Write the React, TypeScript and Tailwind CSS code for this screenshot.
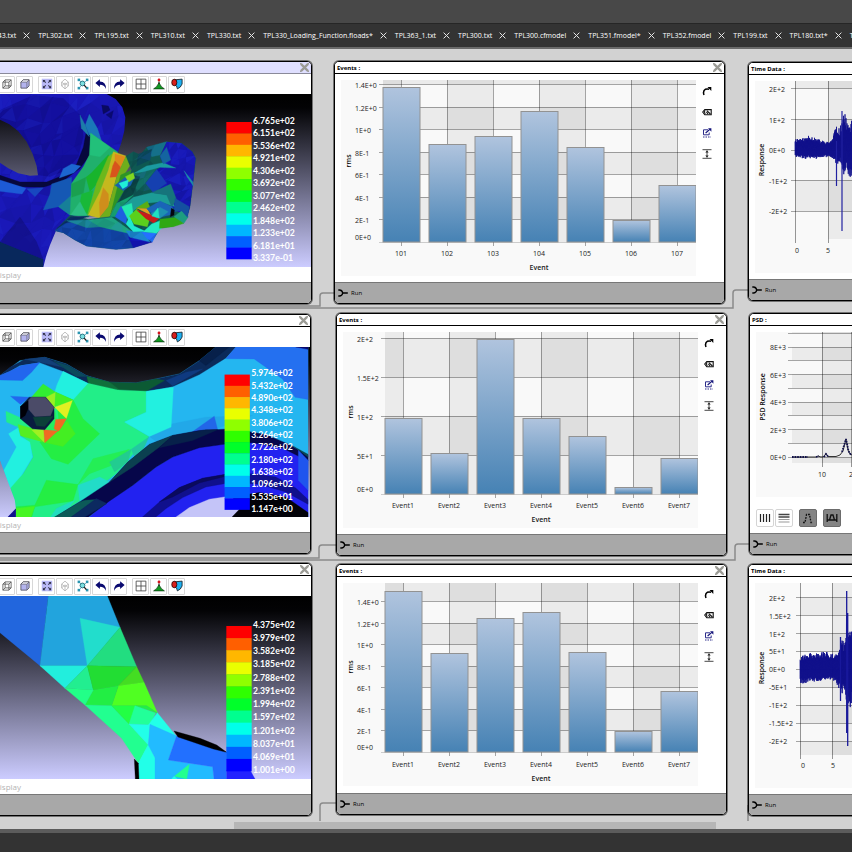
import React from "react";

type Poly = [string, string];

const FONT = "font-['Open_Sans','Noto_Sans',sans-serif]";

/* ---------- helpers ---------- */

function makeRandom(seed: number) {
  let s = seed;
  return () => {
    s = (s * 1664525 + 1013904223) % 4294967296;
    return s / 4294967296;
  };
}

function facets(x0: number, y0: number, x1: number, y1: number, step: number, seed: number) {
  const rnd = makeRandom(seed);
  const cols = Math.ceil((x1 - x0) / step) + 1;
  const rows = Math.ceil((y1 - y0) / step) + 1;
  const pts: [number, number][][] = [];
  for (let r = 0; r < rows; r++) {
    pts.push([]);
    for (let c = 0; c < cols; c++) {
      pts[r].push([
        Math.round(x0 + c * step + (rnd() - 0.5) * step * 0.8),
        Math.round(y0 + r * step + (rnd() - 0.5) * step * 0.8),
      ]);
    }
  }
  const out: { points: string; fill: string; opacity: number }[] = [];
  const add = (a: number[], b: number[], c: number[]) => {
    const v = rnd();
    out.push({
      points: `${a.join()} ${b.join()} ${c.join()}`,
      fill: v > 0.65 ? "#2a4cf0" : "#000030",
      opacity: Math.round(rnd() * 14) / 100,
    });
  };
  for (let r = 0; r + 1 < rows; r++) {
    for (let c = 0; c + 1 < cols; c++) {
      add(pts[r][c], pts[r][c + 1], pts[r + 1][c]);
      add(pts[r][c + 1], pts[r + 1][c + 1], pts[r + 1][c]);
    }
  }
  return out;
}

/* ---------- mesh data (three units per pixel) ---------- */

const bracketBody =
  "-108,102 320,102 347,117 367,142 376,172 373,212 364,248 352,282 380,300 330,470 215,468 168,512 150,555 138,590 130,621 -108,621";
const bracketLobe =
  "500,245 545,250 577,275 587,295 580,360 570,440 560,475 515,440 500,400 460,385 470,330 490,312 480,290";

const bracketHoleAndNeck: Poly[] = [
  ["#07083c", "0,346 60,366 140,366 190,346 230,312 250,262 258,220 270,225 270,285 240,325 190,362 130,382 60,380 0,362"],
  ["#1d5ad6", "-108,340 0,360 78,385 66,402 0,394 -108,380"],
  ["#1747c0", "80,386 130,383 105,410"],
  ["#1c66d0", "190,326 215,312 242,318 222,338 178,354"],
  ["#1558b4", "155,372 215,352 215,420 175,440 130,450 150,402"],
  ["#168098", "175,440 215,405 212,467"],
  ["#1c7ca8", "240,165 258,200 268,230 244,205"],
  ["#1a78b8", "268,163 292,205 305,244 268,225 256,195"],
  ["#0a0a60", "305,135 325,138 330,150 310,162"],
  ["#0a0a70", "318,164 340,152 334,176"],
  ["#20b06c", "272,220 352,275 355,284 330,330 300,400 265,472 210,465 215,370 250,320 268,285"],
  ["#22c07a", "272,220 330,262 300,290 270,285"],
  ["#18b42c", "275,338 325,284 330,300 300,360 270,395 258,352"],
  ["#1aa050", "215,372 258,352 250,400 215,412"],
  ["#18b838", "245,402 278,392 268,462 235,455"],
  ["#2bbd82", "212,465 240,425 262,468"],
  ["#6cb81c", "325,290 344,276 300,395 285,430 262,466 290,370"],
  ["#c6b81e", "340,275 378,288 350,350 325,440 298,474 264,466 300,395 325,330"],
  ["#e08a1c", "345,282 376,290 362,322 345,300"],
  ["#d8541c", "345,302 362,322 352,350 330,352 338,318"],
  ["#cf8e1c", "310,383 325,402 326,440 300,470 298,428"],
  ["#6fae1c", "378,288 402,298 362,360 350,400 330,470 298,474 325,440 350,350"],
  ["#2d9426", "362,345 395,330 380,382 350,430 332,462 350,390"],
];

const bracketRight: Poly[] = [
  ["#0f5a52", "378,288 400,275 415,282 412,295 440,262 500,245 545,250 577,275 587,295 580,360 570,440 560,475 520,498 480,505 470,522 455,546 400,563 348,568 260,558 225,540 190,518 165,512 210,466 265,478 330,470 350,430 380,380 395,330"],
  ["#127064", "400,345 440,320 470,325 435,370 410,395"],
  ["#0b4644", "395,345 420,350 395,410 350,440 372,395"],
  ["#15708a", "440,262 500,245 480,285 455,290"],
  ["#0b4a5a", "415,282 455,268 450,300 410,318"],
  ["#16a070", "350,430 400,405 365,440 345,470 330,470"],
  ["#1246a6", "165,512 200,484 260,500 330,495 380,515 400,530 400,563 348,568 260,558 225,540 190,518"],
  ["#0a2e60", "170,506 212,470 268,468 240,478 195,490"],
  ["#1a8a94", "200,482 265,480 310,500 260,503"],
  ["#1fa884", "265,480 335,472 410,525 350,512 300,500"],
  ["#1414b8", "385,530 457,546 400,563"],
  ["#1b8ad0", "378,512 430,515 450,546 390,532"],
  ["#2570ff", "425,515 470,520 457,546 440,535"],
];

const bracketPort: Poly[] = [
  ["#1a9aa0", "402,340 440,318 490,308 527,324 480,322 430,335"],
  ["#1540b0", "470,328 500,370 460,398 437,370"],
  ["#1464a0", "480,288 500,262 512,300 490,312"],
  ["#1c90a8", "552,332 578,365 580,378 562,352"],
  ["#1560b0", "345,376 378,350 404,350 392,376 370,392"],
  ["#80d820", "376,350 400,338 404,355 386,366"],
  ["#20f0d8", "357,370 385,360 382,378 368,386"],
  ["#1c9c96", "365,440 400,412 455,398 505,405 525,440 480,425 440,430 410,445 380,470"],
  ["#16747c", "455,398 512,372 530,420 515,440 500,405"],
  ["#1e60e0", "345,470 363,438 382,466 378,492"],
  ["#22e8b0", "365,440 395,430 400,465 385,480"],
  ["#20e8d0", "378,492 390,468 402,498 436,514 400,515"],
  ["#5ad01c", "388,468 410,447 448,480 442,500 402,492"],
  ["#5aae14", "408,445 442,424 452,446"],
  ["#e0a020", "412,445 442,446 452,466"],
  ["#c81a1a", "410,450 478,474 462,490 438,476"],
  ["#1a64b8", "440,446 480,423 517,440 522,462 470,474"],
  ["#1e90b0", "452,462 480,442 505,455 480,475"],
  ["#20e0c0", "455,468 474,444 478,475"],
  ["#25e8c0", "455,492 480,482 492,496 470,520 430,515"],
  ["#30a814", "480,478 530,472 552,490 520,500 478,505"],
  ["#1d9d80", "522,470 545,452 565,470 552,490"],
  ["#1450a0", "525,415 568,440 562,472 545,452 522,455"],
  ["#050510", "514,445 523,450 522,465 511,470"],
];

const armMesh: Poly[] = [
  ["#24b6f0", "-108,260 0,225 60,180 135,170 200,190 260,225 330,245 410,247 470,235 540,220 600,180 650,139 927,139 927,654 50,654 25,560 0,480 -108,480"],
  ["#0b2a5a", "0,225 30,200 75,176 135,170 200,190 260,225 330,245 410,247 470,235 540,220 600,180 650,139 710,139 680,172 600,222 520,258 440,273 355,270 265,248 190,212 120,186 60,195 30,212"],
  ["#123f78", "75,176 135,170 190,200 120,185"],
  ["#0b4a5c", "160,180 205,195 262,228 230,228"],
  ["#0c5a34", "262,228 330,245 410,247 470,235 495,240 440,272 355,268 265,247"],
  ["#10703c", "262,228 330,245 360,268 268,248"],
  ["#0f3a80", "500,240 560,215 610,205 520,256"],
  ["#07204a", "600,180 650,139 690,139 620,195"],
  ["#2470f0", "710,139 927,139 927,297 888,290 850,235 765,175 680,174"],
  ["#0a0a70", "890,139 927,139 927,146"],
  ["#2266ee", "-108,270 0,225 30,212 65,195 120,186 95,215 68,240 0,238"],
  ["#22a8e8", "450,408 520,370 620,350 760,345 650,385 560,395 480,430"],
  ["#2266e8", "575,397 645,347 655,387"],
  ["#22ee88", "265,248 355,268 440,272 440,335 375,365 448,408 410,450 350,520 240,602 160,654 50,654 45,600 30,560 70,520 100,470 90,430 60,400 50,370 110,290 190,300 220,295"],
  ["#22f0e0", "190,212 265,248 220,298 165,275 172,252"],
  ["#22f0e0", "440,272 522,260 515,380 450,408 375,365 440,335"],
  ["#22f0e0", "26,400 55,382 62,408 90,425 98,470 65,525 30,565 12,510 50,440"],
  ["#24ee44", "168,275 220,298 250,355 300,400 205,492 155,475 120,425 180,385"],
  ["#24ee44", "140,540 235,553 220,602 105,620 95,654 48,654 48,620 105,615"],
  ["#46f524", "48,625 105,618 92,654 48,654"],
  ["#24ee55", "235,553 280,475 390,447 355,488 270,520"],
  ["#22dcc8", "240,602 235,555 300,530 330,545 265,590"],
  ["#22dcc0", "170,625 225,600 200,632 150,654"],
  ["#22cc90", "330,485 395,447 385,485 345,515"],
  ["#22c8a0", "395,447 448,410 430,450 405,470"],
  ["#22ee88", "18,332 62,352 50,378 20,365"],
  ["#2266ee", "32,287 88,290 62,312"],
  ["#32ee32", "95,290 130,250 168,275 150,310"],
  ["#9af022", "136,292 168,275 165,325"],
  ["#44f022", "168,275 218,298 165,318"],
  ["#e2f022", "165,320 218,300 200,354"],
  ["#24ee60", "130,388 168,330 172,392"],
  ["#f06a22", "168,357 200,355 178,394 163,385"],
  ["#44ee22", "178,392 202,362 227,400 190,438 135,426"],
  ["#55ee22", "62,406 55,372 100,385 135,426"],
  ["#a0f022", "95,388 132,386 134,426"],
  ["#f06a22", "132,388 174,392 135,427"],
  ["#0a1c40", "62,318 88,290 138,290 163,320 163,355 135,388 98,385 62,355"],
  ["#0b4038", "100,350 160,348 135,378 110,376"],
  ["#4b4b68", "85,300 95,290 136,290 163,320 152,346 105,348 85,325"],
  ["#000008", "62,318 85,300 85,325 76,345 62,355"],
  ["#2222f0", "265,654 330,600 400,555 470,500 520,470 600,440 680,430 760,425 850,440 927,480 927,654"],
  ["#06064a", "160,654 240,605 330,545 385,485 450,432 520,405 600,390 700,385 800,402 870,432 927,465 927,482 850,443 760,427 680,431 600,442 520,470 470,500 400,555 330,602 262,654"],
  ["#0c5a58", "160,654 240,605 255,600 290,598 210,654"],
  ["#0c2a60", "210,654 290,595 322,610 250,654"],
  ["#0b4050", "330,545 385,485 450,432 520,405 480,440 400,500"],
  ["#07204a", "520,405 620,388 655,388 580,420 480,442"],
  ["#0a4a54", "880,436 927,462 927,470"],
  ["#1f55ee", "898,450 927,480 927,570 898,540"],
  ["#10108c", "425,654 480,605 540,562 610,534 680,522 760,520 830,530 890,563 927,598 927,612 860,575 780,552 700,546 620,560 550,592 500,625 465,654"],
  ["#0a0a5c", "480,605 540,562 610,534 680,522 680,528 600,548 520,590"],
  ["#c4c4f8", "525,654 570,622 630,597 690,588 745,590 720,630 700,654"],
  ["#020208", "700,590 780,577 860,590 927,637 927,654 695,654 720,628"],
];

const strutMesh: Poly[] = [
  ["#2266dd", "-108,123 145,123 120,332 0,233 -108,160"],
  ["#22a4dd", "145,123 322,123 360,217 262,332 120,332"],
  ["#22ddcc", "240,190 360,217 262,332"],
  ["#22dd80", "360,217 410,335 262,332"],
  ["#22eedd", "120,332 262,332 195,400"],
  ["#22ee90", "262,332 280,405 195,400"],
  ["#22dd33", "262,332 410,335 355,392 280,405"],
  ["#44dd22", "410,335 432,382 355,392"],
  ["#50ff22", "432,382 472,473 440,452 335,452 355,392"],
  ["#22ee44", "280,405 355,392 335,452 255,450"],
  ["#22ff88", "195,400 280,405 255,450"],
  ["#22ff90", "255,450 335,452 387,507 445,570 415,625 365,550"],
  ["#22ff44", "335,452 410,452 387,507"],
  ["#22f044", "405,452 440,452 474,475"],
  ["#22ff99", "405,452 467,474 450,510 387,507"],
  ["#22ffe8", "387,507 450,510 445,570"],
  ["#22ffe8", "445,510 472,473 530,545"],
  ["#22ffe8", "445,568 465,608 465,672 415,672 415,625"],
  ["#22bbff", "450,508 530,543 505,615 638,635 642,672 465,672 465,608 445,570"],
  ["#2270ff", "530,543 640,578 680,592 680,672 642,672 638,635 505,615"],
  ["#2222ff", "680,645 750,645 765,672 680,672"],
  ["#22ff90", "568,628 560,672 523,664"],
  ["#22ffe8", "515,672 522,664 532,672"],
  ["#000000", "522,528 600,550 650,570 680,592 640,582 534,546"],
  ["#000000", "403,612 415,625 417,672 406,672"],
];

const legendColors = [
  "#ff0000", "#ff5f00", "#ffb700", "#eaff00", "#8fff00", "#2fff00",
  "#00ff2a", "#00ff8f", "#00ffea", "#00b7ff", "#005fff", "#0000ff",
];

function Polys({ list }: { list: Poly[] }) {
  return (
    <>
      {list.map(([fill, points], i) => (
        <polygon key={i} fill={fill} stroke={fill} strokeWidth={1} points={points} />
      ))}
    </>
  );
}

function Legend({ x, top, bottom, labelTop, labels }: { x: number; top: number; bottom: number; labelTop: number; labels: string[] }) {
  const step = (bottom - top) / legendColors.length;
  const labelStep = (bottom - 3 - labelTop) / (labels.length - 1);
  return (
    <g>
      {legendColors.map((c, i) => (
        <rect key={c} x={x} y={top + i * step} width={76} height={step + 1} fill={c} />
      ))}
      {labels.map((l, i) => (
        <text key={l} x={x + 80} y={labelTop + i * labelStep + 10} fill="#fff" className="font-['Lato',sans-serif] text-[26px] font-bold">
          {l}
        </text>
      ))}
    </g>
  );
}

function Scene({ id, top, height, children }: { id: string; top: number; height: number; children: React.ReactNode }) {
  return (
    <svg className="block w-full flex-1 min-h-0" viewBox={`-105 ${top} 1038 ${height}`} preserveAspectRatio="xMinYMin slice" role="img" aria-label="Stress contour plot">
      <defs>
        <linearGradient id={id} gradientUnits="userSpaceOnUse" x1="0" y1={top} x2="0" y2={top + height}>
          <stop offset="0" stopColor="#000" />
          <stop offset="0.08" stopColor="#030305" />
          <stop offset="1" stopColor="#ccccff" />
        </linearGradient>
      </defs>
      <rect x={-108} y={top} width={1050} height={height + 6} fill={`url(#${id})`} />
      {children}
    </svg>
  );
}

const bodyFacets = facets(-108, 100, 400, 630, 38, 7);
const lobeFacets = facets(430, 240, 600, 500, 26, 21);
const midFacets = facets(160, 240, 440, 570, 30, 5);

function BracketScene() {
  return (
    <Scene id="sky-a" top={102} height={519}>
      <defs>
        <clipPath id="clip-body"><polygon points={bracketBody} /></clipPath>
        <clipPath id="clip-lobe"><polygon points={bracketLobe} /></clipPath>
        <clipPath id="clip-mid"><polygon points={bracketRight[0][1]} /></clipPath>
      </defs>
      <polygon points={bracketBody} fill="#1a18b8" />
      <polygon fill="#1410a0" points="-108,140 0,150 100,105 190,115 245,170 250,230 235,290 200,330 150,350 113,345 75,240 0,180" />
      <g clipPath="url(#clip-body)">
        {bodyFacets.map((f, i) => (
          <polygon key={i} points={f.points} fill={f.fill} opacity={f.opacity} />
        ))}
        <polygon fill="#08285c" points="-108,500 0,545 130,598 130,625 -108,625" />
        <polygon fill="#0d0b70" points="0,545 60,470 110,545 130,598" opacity="0.5" />
      </g>
      <polygon fill="url(#sky-a)" points="-108,165 0,179 28,193 55,214 80,245 98,282 110,318 114,346 90,347 55,340 25,325 0,308 -108,250" />
      <Polys list={bracketHoleAndNeck} />
      <Polys list={bracketRight} />
      <g clipPath="url(#clip-mid)">
        {midFacets.map((f, i) => (
          <polygon key={i} points={f.points} fill={f.fill} opacity={f.opacity} />
        ))}
      </g>
      <polygon points={bracketLobe} fill="#1818b8" />
      <g clipPath="url(#clip-lobe)">
        {lobeFacets.map((f, i) => (
          <polygon key={i} points={f.points} fill={f.fill} opacity={f.opacity} />
        ))}
      </g>
      <Polys list={bracketPort} />
      <Legend x={679} top={186} bottom={597} labelTop={181} labels={["6.765e+02", "6.151e+02", "5.536e+02", "4.921e+02", "4.306e+02", "3.692e+02", "3.077e+02", "2.462e+02", "1.848e+02", "1.233e+02", "6.181e+01", "3.337e-01"]} />
    </Scene>
  );
}

function ArmScene() {
  return (
    <Scene id="sky-b" top={139} height={515}>
      <Polys list={armMesh} />
      <polygon fill="url(#sky-b)" points="-108,480 0,480 15,520 45,600 48,625 20,654 -108,654" />
      <polygon fill="#10108c" points="20,654 48,625 48,654" />
      <Legend x={676} top={222} bottom={628} labelTop={217} labels={["5.974e+02", "5.432e+02", "4.890e+02", "4.348e+02", "3.806e+02", "3.264e+02", "2.722e+02", "2.180e+02", "1.638e+02", "1.096e+02", "5.535e+01", "1.147e+00"]} />
    </Scene>
  );
}

function StrutScene() {
  return (
    <Scene id="sky-c" top={123} height={549}>
      <Polys list={strutMesh} />
      <Legend x={679} top={213} bottom={648} labelTop={208} labels={["4.375e+02", "3.979e+02", "3.582e+02", "3.185e+02", "2.788e+02", "2.391e+02", "1.994e+02", "1.597e+02", "1.201e+02", "8.037e+01", "4.069e+01", "1.001e+00"]} />
    </Scene>
  );
}

/* ---------- window frame ---------- */

function CloseIcon() {
  return (
    <svg className="size-[9px]" viewBox="0 0 8 8">
      <path d="M0.8 0.8 L7.2 7.2 M7.2 0.8 L0.8 7.2" stroke="#9b9b95" strokeWidth="2" fill="none" />
      <path d="M0 1 L1 0 M7 0 L8 1 M0 7 L1 8 M7 8 L8 7" stroke="#9b9b95" strokeWidth="1" />
    </svg>
  );
}

function Win({ place, title, tinted, closable = true, run = true, children }: {
  place: string; title: string; tinted?: boolean; closable?: boolean; run?: boolean; children: React.ReactNode;
}) {
  return (
    <section className={`absolute flex flex-col overflow-hidden rounded-[5px] border border-black bg-white ring-1 ring-black/45 ${place}`}>
      <header className={`flex h-3 shrink-0 items-center justify-between border-b px-0.5 ${tinted ? "border-[#8a8a9a] bg-[#dfdfff]" : "border-black bg-white"}`}>
        <h2 className="text-[6px] leading-3 font-bold text-black">{title}</h2>
        {closable && (
          <button type="button" aria-label="Close window">
            <CloseIcon />
          </button>
        )}
      </header>
      {children}
      <footer className="flex h-[21px] shrink-0 items-center border-t border-[#777] bg-[#a8a8a8] pl-[3px]">
        {run && (
          <button type="button" className="flex items-center gap-[3px] text-[6px] leading-none text-black">
            <svg className="h-2 w-2.5" viewBox="0 0 10 8">
              <path d="M0.3 1 H1.5 Q4 1 4.8 4 Q4 7 1.5 7 H0.3 M4.5 4 H9.8" fill="none" stroke="#000" strokeWidth="1.3" />
            </svg>
            Run
          </button>
        )}
      </footer>
    </section>
  );
}

/* ---------- 3D viewer toolbar ---------- */

const cubeWire = (
  <path d="M2.5 5.5 L5.5 2.5 H13.5 V10.5 L10.5 13.5 H2.5 Z M2.5 5.5 H10.5 V13.5 M10.5 5.5 L13.5 2.5 M5.5 2.5 V10.5 H13.5 M5.5 10.5 L2.5 13.5" fill="none" stroke="#555" strokeWidth="1.1" />
);
const cubeSolid = (
  <>
    <path d="M2.5 5.5 L5.5 2.5 H13.5 V10.5 L10.5 13.5 H2.5 Z" fill="#b4b4ee" stroke="#44444f" strokeWidth="1" />
    <path d="M2.5 5.5 L5.5 2.5 H13.5 L10.5 5.5 Z" fill="#f0f0fa" stroke="#44444f" strokeWidth="0.8" />
    <path d="M10.5 5.5 V13.5" stroke="#6a6a7a" strokeWidth="1" />
  </>
);
const fitIcon = (
  <>
    <rect x="1" y="1" width="14" height="14" fill="#b9b9f5" />
    <path d="M2.5 2.5 H6 L2.5 6 Z M13.5 2.5 V6 L10 2.5 Z M2.5 13.5 V10 L6 13.5 Z M13.5 13.5 H10 L13.5 10 Z" fill="#33334a" />
    <path d="M3 3 L6.3 6.3 M13 3 L9.7 6.3 M3 13 L6.3 9.7 M13 13 L9.7 9.7" stroke="#33334a" strokeWidth="1.4" />
  </>
);
const meshIcon = (
  <path d="M8 1.5 L12.5 5.5 V10.5 L8 14.5 L3.5 10.5 V5.5 Z M3.5 5.5 L8 9 L12.5 5.5 M8 9 V14.5 M3.5 10.5 L8 6.5 L12.5 10.5" fill="none" stroke="#b2b2b2" strokeWidth="1.1" />
);
const zoomIcon = (
  <>
    <path d="M2.5 2.5 L13.5 13.5 M13.5 2.5 L2.5 13.5" stroke="#38a8c0" strokeWidth="1" />
    <rect x="0.8" y="0.8" width="3.4" height="3.4" fill="#2b95b0" />
    <rect x="11.8" y="0.8" width="3.4" height="3.4" fill="#2b95b0" />
    <rect x="0.8" y="11.8" width="3.4" height="3.4" fill="#2b95b0" />
    <rect x="11.8" y="11.8" width="3.4" height="3.4" fill="#2b95b0" />
    <circle cx="7.3" cy="7.3" r="3.2" fill="#7ae0e0" stroke="#226a7a" strokeWidth="1.2" />
    <path d="M9.5 9.5 L12.5 12.8" stroke="#222" strokeWidth="1.8" />
  </>
);
const undoIcon = <path d="M0.5 6.5 L6.5 1.5 V4.5 Q15 4.5 14.5 14.5 Q12.5 9 6.5 9 V12 Z" fill="#0a0a70" />;
const redoIcon = <path d="M15.5 6.5 L9.5 1.5 V4.5 Q1 4.5 1.5 14.5 Q3.5 9 9.5 9 V12 Z" fill="#0a0a70" />;
const gridIcon = <path d="M1.5 1.5 H14.5 V14.5 H1.5 Z M8 1.5 V14.5 M1.5 8 H14.5" fill="none" stroke="#444" strokeWidth="1.1" />;
const loadIcon = (
  <>
    <path d="M8 4.5 V8" stroke="#000" strokeWidth="1.4" />
    <path d="M0.8 14.5 Q5 12.5 8 6.5 Q11 12.5 15.2 14.5 Z" fill="#119a22" stroke="#06300a" strokeWidth="0.9" />
    <circle cx="8" cy="2.6" r="1.9" fill="#d4141c" />
  </>
);
const resultIcon = (
  <>
    <path d="M4 2.5 L14.8 1.5 V8 Q13 13 8.5 14.5 Q8.5 9.5 4 9 Z" fill="#1fb0f0" stroke="#101820" strokeWidth="1.1" />
    <ellipse cx="4.4" cy="6" rx="3.4" ry="4.4" fill="#d8201c" stroke="#200" strokeWidth="1" />
  </>
);

const toolGroups: { name: string; icon: React.ReactNode }[][] = [
  [{ name: "Points", icon: cubeWire }, { name: "Wireframe", icon: cubeWire }, { name: "Solid", icon: cubeSolid }],
  [
    { name: "Fit all", icon: fitIcon },
    { name: "Show mesh", icon: meshIcon },
    { name: "Zoom region", icon: zoomIcon },
    { name: "Undo", icon: undoIcon },
    { name: "Redo", icon: redoIcon },
  ],
  [{ name: "Layout", icon: gridIcon }, { name: "Loads", icon: loadIcon }, { name: "Results", icon: resultIcon }],
];

function Viewer({ children }: { children: React.ReactNode }) {
  return (
    <div className="flex min-h-0 flex-1 flex-col">
      <div className="flex h-5 shrink-0 items-center gap-[5px] pl-[15px]">
        {toolGroups.map((group, g) => (
          <div key={g} className="flex gap-px">
            {group.map((t) => (
              <button key={t.name} type="button" aria-label={t.name} className="flex h-[17px] w-[17px] items-center justify-center rounded-[1px] border border-[#d8d8d8] bg-white">
                <svg className="size-3" viewBox="0 0 16 16">{t.icon}</svg>
              </button>
            ))}
          </div>
        ))}
      </div>
      {children}
      <div className="h-[15px] shrink-0 pl-[29px] text-[8px] leading-[15px] text-[#b4b4b4]">Display</div>
    </div>
  );
}

/* ---------- charts ---------- */

const label = "text-[7px]";

interface BarProps {
  height: number; bottom: number; x0: number; grid: { y: number; t: string }[];
  zeroY: number; tops: number[]; names: string[]; catY: number; titleY: number; rmsY: number;
}

function BarChart(p: BarProps) {
  const W = 355;
  const left = 42;
  const lines = [p.bottom, ...p.grid.map((g) => g.y), 0];
  const centers = p.names.map((_, i) => p.x0 + i * 46);
  return (
    <svg width={W} height={p.height} viewBox={`0 0 ${W} ${p.height}`} className="block shrink-0" role="img" aria-label="rms by event">
      <defs>
        <linearGradient id="bar" x1="0" y1="0" x2="0" y2="1">
          <stop offset="0" stopColor="#b0c4de" />
          <stop offset="1" stopColor="#4682b4" />
        </linearGradient>
      </defs>
      <rect width={W} height={p.height} fill="#f9f9f9" />
      {lines.slice(0, -1).map((y, i) =>
        i % 2 === 1 ? <rect key={i} x={left} y={lines[i + 1]} width={W - left} height={y - lines[i + 1]} fill="#000" opacity="0.055" /> : null,
      )}
      {[left, ...centers].map((x, i, all) => {
        const end = i + 1 < all.length ? all[i + 1] : W;
        return i % 2 === 0 ? <rect key={i} x={x} y={0} width={end - x} height={p.bottom} fill="#000" opacity="0.055" /> : null;
      })}
      {p.grid.map((g) => (
        <rect key={g.t} x={38} y={g.y} width={W - 38} height={1} fill="#000" opacity="0.34" />
      ))}
      <rect x={38} y={p.bottom} width={W - 38} height={1} fill="#000" opacity="0.18" />
      {centers.map((x) => (
        <rect key={x} x={x} y={0} width={1} height={p.bottom + 4} fill="#000" opacity="0.34" />
      ))}
      {centers.map((x, i) => (
        <rect key={x} x={x - 18} y={p.tops[i]} width={37} height={p.bottom - p.tops[i]} fill="url(#bar)" stroke="#929292" strokeWidth="1" />
      ))}
      {p.grid.map((g) => (
        <text key={g.t} x={14} y={g.y + 4} fill="#222" className={label}>{g.t}</text>
      ))}
      <text x={14} y={p.zeroY + 3} fill="#222" className={label}>0E+0</text>
      {centers.map((x, i) => (
        <text key={x} x={x} y={p.catY + 3} textAnchor="middle" fill="#222" className={label}>{p.names[i]}</text>
      ))}
      <text x={p.x0 + 138} y={p.titleY + 3} textAnchor="middle" fill="#222" className="text-[7px] font-semibold">Event</text>
      <text transform={`translate(10 ${p.rmsY}) rotate(-90)`} textAnchor="middle" fill="#111" className="text-[7px] font-semibold">rms</text>
    </svg>
  );
}

function ChartTools() {
  return (
    <div className="flex flex-1 flex-col items-center gap-[11px] pt-1.5 pr-1.5">
      <button type="button" aria-label="Redraw">
        <svg className="size-2.5" viewBox="0 0 10 10">
          <path d="M2 9 Q0.5 5 3.5 3.2 Q5 2.6 7 3.2" fill="none" stroke="#000" strokeWidth="1.5" />
          <path d="M5.5 1 H9.3 V5 Z" fill="#000" />
        </svg>
      </button>
      <button type="button" aria-label="Tag">
        <svg className="size-2.5" viewBox="0 0 10 10">
          <path d="M0.7 5 L2.8 2.6 H9.2 V7.8 H2.8 Z" fill="none" stroke="#111" strokeWidth="1.1" />
          <path d="M3 3.2 Q1.8 5 3.2 7 M4.8 3.6 L8.4 7 M4.4 5 L6 6.8" fill="none" stroke="#111" strokeWidth="1.1" />
        </svg>
      </button>
      <button type="button" aria-label="Export">
        <svg className="size-2.5" viewBox="0 0 10 10">
          <path d="M6 1.8 H1.5 V6.8 H7.2 V4.5" fill="none" stroke="#2c2c8a" strokeWidth="1" />
          <path d="M3.6 5 L7.8 1.4" stroke="#14147a" strokeWidth="1.2" />
          <path d="M6 0.3 H9.4 V3.8 Z" fill="#14147a" />
          <path d="M1 9 H9" stroke="#2c2c8a" strokeWidth="1" strokeDasharray="1.5 1" />
        </svg>
      </button>
      <button type="button" aria-label="Fit height">
        <svg className="size-2.5" viewBox="0 0 10 10">
          <path d="M0.5 0.7 H9.5 M0.5 9.3 H9.5 M5 1.5 V8.5" stroke="#333" strokeWidth="0.9" />
          <path d="M3.3 3.6 L5 1.6 L6.7 3.6 Z M3.3 6.4 L5 8.4 L6.7 6.4 Z" fill="#222" />
        </svg>
      </button>
    </div>
  );
}

const eventNames = ["Event1", "Event2", "Event3", "Event4", "Event5", "Event6", "Event7"];

interface PlotProps {
  height: number; left: number; bottom: number; tick: number; unitX: number[];
  xLabels: { x: number; t: string }[]; xLabelY: number; lines: number[]; yLabels: { y: number; t: string }[];
  title: string; titleY: number; vParity: number; hParity: number; children: React.ReactNode;
}

function LinePlot(p: PlotProps) {
  const W = 128;
  const cols = [p.left, ...p.unitX.filter((x) => x > p.left), W];
  const rows = [0, ...p.lines, p.bottom];
  return (
    <svg width={W} height={p.height} viewBox={`0 0 ${W} ${p.height}`} className="block shrink-0" role="img" aria-label={p.title}>
      <rect width={W} height={p.height} fill="#f9f9f9" />
      {cols.slice(0, -1).map((x, i) =>
        i % 2 === p.vParity ? <rect key={x} x={x} y={0} width={cols[i + 1] - x} height={p.bottom} fill="#000" opacity="0.055" /> : null,
      )}
      {rows.slice(0, -1).map((y, i) =>
        i % 2 === p.hParity ? <rect key={y} x={p.left} y={y} width={W - p.left} height={rows[i + 1] - y} fill="#000" opacity="0.055" /> : null,
      )}
      {p.lines.map((y) => (
        <rect key={y} x={p.left - 4} y={y} width={W} height={1} fill="#000" opacity="0.34" />
      ))}
      {p.unitX.map((x) => (
        <rect key={x} x={x} y={0} width={1} height={p.tick} fill="#000" opacity="0.4" />
      ))}
      {p.children}
      {p.yLabels.map((l) => (
        <text key={l.t} x={14} y={l.y + 3} fill="#222" className={label}>{l.t}</text>
      ))}
      {p.xLabels.map((l) => (
        <text key={l.t} x={l.x} y={p.xLabelY + 3} textAnchor="middle" fill="#222" className={label}>{l.t}</text>
      ))}
      <text transform={`translate(9 ${p.titleY}) rotate(-90)`} textAnchor="middle" fill="#111" className="text-[7px] font-semibold">{p.title}</text>
    </svg>
  );
}

/* envelope: [x, up, down] stops in pixels, interpolated and jittered */
function wave(mid: number, env: [number, number, number][], seed: number) {
  const rnd = makeRandom(seed);
  let d = "";
  const end = env[env.length - 1][0];
  for (let x = env[0][0]; x < end; x += 0.5) {
    let k = 0;
    while (env[k + 1][0] < x) k++;
    const [xa, ua, da] = env[k];
    const [xb, ub, db] = env[k + 1];
    const t = (x - xa) / (xb - xa || 1);
    const up = (ua + (ub - ua) * t) * (0.62 + rnd() * 0.38);
    const dn = (da + (db - da) * t) * (0.62 + rnd() * 0.38);
    d += `${d ? "L" : "M"}${x} ${(mid - up).toFixed(1)}L${x + 0.25} ${(mid + dn).toFixed(1)}`;
  }
  return d;
}

const waveA = wave(69, [[40, 12, 7], [50, 12, 9], [54, 16, 8], [60, 12, 9], [66, 10, 8], [73, 8, 7], [78, 12, 9], [79, 20, 12], [82, 24, 14], [85, 22, 12], [87, 32, 22], [88, 40, 30], [91, 34, 18], [94, 24, 28], [97, 32, 26], [110, 20, 20], [128, 12, 12]], 11);
const waveC = wave(86, [[45, 13, 15], [55, 16, 13], [64, 17, 12], [72, 17, 11], [80, 16, 12], [84, 20, 20], [86, 30, 26], [90, 26, 22], [92, 62, 40], [94, 36, 42], [97, 40, 34], [110, 30, 30], [128, 14, 14]], 31);

/* ---------- tabs ---------- */

const tabs = [
  "TPL343.txt", "TPL302.txt", "TPL195.txt", "TPL310.txt", "TPL330.txt", "TPL330_Loading_Function.floads*",
  "TPL363_1.txt", "TPL300.txt", "TPL300.cfmodel", "TPL351.fmodel*", "TPL352.fmodel", "TPL199.txt", "TPL180.txt*", "TPL210.txt",
];

function TabBar() {
  return (
    <nav className="flex h-6 shrink-0 items-center overflow-hidden border-t border-[#262626] bg-[#333]">
      <div className="-ml-[18px] flex items-center gap-2">
        {tabs.map((t) => (
          <div key={t} className="flex shrink-0 items-center gap-[7px]">
            <button type="button" className="text-[7px] leading-3 whitespace-nowrap text-white">{t}</button>
            <button type="button" aria-label={`Close ${t}`}>
              <svg className="size-[7px]" viewBox="0 0 7 7">
                <path d="M0.6 0.6 L6.4 6.4 M6.4 0.6 L0.6 6.4" stroke="#e4e4e4" strokeWidth="1" />
              </svg>
            </button>
          </div>
        ))}
      </div>
    </nav>
  );
}

/* ---------- page ---------- */

function PsdButton({ name, dark, children }: { name: string; dark?: boolean; children: React.ReactNode }) {
  return (
    <button type="button" aria-label={name} className={`flex h-[18px] w-[18px] items-center justify-center rounded-[2px] border ${dark ? "border-[#6c6c6c] bg-[#848484]" : "border-[#d4d4d4] bg-white"}`}>
      <svg className="size-3" viewBox="0 0 12 12">{children}</svg>
    </button>
  );
}

export default function App() {
  return (
    <div className={`flex h-screen flex-col overflow-hidden bg-[#333] ${FONT}`}>
      <header className="h-[23px] shrink-0 bg-[#484848]" />
      <TabBar />
      <main className="relative flex-1 overflow-hidden border-t-2 border-[#6a6a6a] bg-[#d2d2d2]">
        <svg className="absolute top-0 left-0 h-full w-full" aria-hidden="true">
          <g fill="none" stroke="#8a8a8a" strokeWidth="1.5">
            <path d="M340 244 H323 Q320 244 320 247 V257 H0" />
            <path d="M752 241 H736 Q733 241 733 244 V259 H0" />
            <path d="M340 496 H322 Q319 496 319 499 V509 H0" />
            <path d="M752 495 H738 Q735 495 735 498 V511 H0" />
            <path d="M340 754 H323 Q320 754 320 757 V772" />
            <path d="M748 756 V772" />
          </g>
        </svg>

        <Win place="left-[-36px] top-[12px] h-[243px] w-[348px]" title="" tinted run={false}>
          <Viewer><BracketScene /></Viewer>
        </Win>
        <Win place="left-[-36px] top-[265px] h-[240px] w-[347px]" title="" run={false}>
          <Viewer><ArmScene /></Viewer>
        </Win>
        <Win place="left-[-36px] top-[514px] h-[253px] w-[348px]" title="" run={false}>
          <Viewer><StrutScene /></Viewer>
        </Win>

        <Win place="left-[334px] top-[12px] h-[243px] w-[391px]" title="Events :">
          <div className="flex min-h-0 flex-1 pt-1.5 pl-1.5">
            <BarChart
              height={196} bottom={162} x0={60} zeroY={157} catY={173} titleY={187} rmsY={81}
              grid={[{ y: 139, t: "2E-1" }, { y: 117, t: "4E-1" }, { y: 94, t: "6E-1" }, { y: 72, t: "8E-1" }, { y: 49, t: "1E+0" }, { y: 27, t: "1.2E+0" }, { y: 4, t: "1.4E+0" }]}
              tops={[7.5, 64.5, 56.5, 31.5, 67.5, 140.5, 105.5]}
              names={["101", "102", "103", "104", "105", "106", "107"]}
            />
            <ChartTools />
          </div>
        </Win>
        <Win place="left-[336px] top-[264px] h-[243px] w-[391px]" title="Events :">
          <div className="flex min-h-0 flex-1 pt-1.5 pl-1.5">
            <BarChart
              height={196} bottom={162} x0={60} zeroY={157} catY={173} titleY={187} rmsY={80}
              grid={[{ y: 123, t: "5E+1" }, { y: 84, t: "1E+2" }, { y: 45, t: "1.5E+2" }, { y: 6, t: "2E+2" }]}
              tops={[86.5, 121.5, 7.5, 86.5, 104.5, 155.5, 126.5]}
              names={eventNames}
            />
            <ChartTools />
          </div>
        </Win>
        <Win place="left-[336px] top-[515px] h-[251px] w-[391px]" title="Events :">
          <div className="flex min-h-0 flex-1 pt-1.5 pl-1.5">
            <BarChart
              height={203} bottom={169} x0={60} zeroY={164} catY={181} titleY={195} rmsY={84}
              grid={[{ y: 147, t: "2E-1" }, { y: 126, t: "4E-1" }, { y: 104, t: "6E-1" }, { y: 83, t: "8E-1" }, { y: 61, t: "1E+0" }, { y: 40, t: "1.2E+0" }, { y: 18, t: "1.4E+0" }]}
              tops={[8.5, 70.5, 35.5, 29.5, 69.5, 148.5, 108.5]}
              names={eventNames}
            />
            <ChartTools />
          </div>
        </Win>

        <Win place="left-[748px] top-[13px] h-[239px] w-[150px]" title="Time Data :" closable={false}>
          <div className="min-h-0 flex-1 pt-1.5 pl-1.5">
            <LinePlot
              height={192} left={40} bottom={158} tick={162} unitX={[40, 73, 106]} xLabels={[{ x: 42, t: "0" }, { x: 73, t: "5" }]} xLabelY={169}
              lines={[7, 38, 69, 99, 130]} title="Response" titleY={79} vParity={1} hParity={0}
              yLabels={[{ y: 8, t: "2E+2" }, { y: 39, t: "1E+2" }, { y: 69, t: "0E+0" }, { y: 100, t: "-1E+2" }, { y: 130, t: "-2E+2" }]}
            >
              <path d={waveA} fill="none" stroke="#10108c" strokeWidth="0.8" />
              <path d="M81.5 60 V105 M87 60 V150 M87 30 V60" stroke="#2020a0" strokeWidth="1.2" />
            </LinePlot>
          </div>
        </Win>
        <Win place="left-[749px] top-[264px] h-[242px] w-[150px]" title="PSD :" closable={false}>
          <div className="min-h-0 flex-1 pt-1.5 pl-1.5">
            <LinePlot
              height={165} left={36} bottom={131} tick={135} unitX={[66, 95]} xLabels={[{ x: 66, t: "10" }, { x: 97, t: "20" }]} xLabelY={142}
              lines={[1, 15, 28, 42, 56, 70, 83, 97, 111, 125]} title="PSD Response" titleY={65} vParity={1} hParity={0}
              yLabels={[{ y: 15, t: "8E+3" }, { y: 43, t: "6E+3" }, { y: 70, t: "4E+3" }, { y: 98, t: "2E+3" }, { y: 125, t: "0E+0" }]}
            >
              <path d="M36 125 H60 L62 124 L65 125 L68 124.5 L70 121.5 L72 124.5 L80 124.5 L84 123 L87 119 L90 107 L92 118 L94 122 L98 124" fill="none" stroke="#333" strokeWidth="1" />
              <path d="M36 125 H52 M60 125 L63 124 M68 125 L70 122 L72 124.5 M86 120 L90 107 L92.5 119 L95 123" fill="none" stroke="#10104c" strokeWidth="1.8" strokeDasharray="1.6 1" />
            </LinePlot>
            <div className="flex gap-px pt-3">
              <PsdButton name="Vertical grid"><path d="M1.5 2 V10 M4.5 2 V10 M7.5 2 V10 M10.5 2 V10" stroke="#222" strokeWidth="1.2" /></PsdButton>
              <PsdButton name="Horizontal grid"><path d="M0.5 2.5 H11.5 M0.5 5 H11.5" stroke="#444" strokeWidth="1.4" /><path d="M0.5 7.5 H11.5 M0.5 10 H11.5" stroke="#999" strokeWidth="1" /></PsdButton>
              <div className="flex gap-1.5 pl-[5px]">
                <PsdButton name="Peak curve" dark><path d="M1 10.5 H3 L4.5 2.5 H7.5 L9 10.5 H11" fill="none" stroke="#111" strokeWidth="1.3" strokeDasharray="1.8 1.1" /></PsdButton>
                <PsdButton name="Peak band" dark><path d="M1.2 2 V10 M10.8 2 V10 M1.2 8 H10.8 M3.5 8 L5 3 H7 L8.5 8" fill="none" stroke="#111" strokeWidth="1.3" /></PsdButton>
              </div>
            </div>
          </div>
        </Win>
        <Win place="left-[748px] top-[515px] h-[252px] w-[150px]" title="Time Data :" closable={false}>
          <div className="min-h-0 flex-1 pt-1.5 pl-1.5">
            <LinePlot
              height={205} left={45} bottom={172} tick={176} unitX={[45, 77, 109]} xLabels={[{ x: 48, t: "0" }, { x: 78, t: "5" }]} xLabelY={182}
              lines={[14, 32, 50, 68, 86, 104, 122, 140, 158]} title="Response" titleY={85} vParity={1} hParity={1}
              yLabels={[{ y: 15, t: "2E+2" }, { y: 33, t: "1.5E+2" }, { y: 51, t: "1E+2" }, { y: 68, t: "5E+1" }, { y: 86, t: "0E+0" }, { y: 104, t: "-5E+1" }, { y: 122, t: "-1E+2" }, { y: 140, t: "-1.5E+2" }, { y: 158, t: "-2E+2" }]}
            >
              <path d={waveC} fill="none" stroke="#10108c" strokeWidth="0.8" />
              <path d="M85.5 54 V118 M91.7 8 V150 M92.7 30 V163" stroke="#18189a" strokeWidth="1.3" />
            </LinePlot>
          </div>
        </Win>

        <div className="absolute right-[136px] bottom-0 left-[234px] h-[7px] bg-[#b6b6b6]" />
      </main>
      <footer className="h-[23px] shrink-0 border-t-4 border-[#5c5c5c] bg-[#333]" />
    </div>
  );
}
